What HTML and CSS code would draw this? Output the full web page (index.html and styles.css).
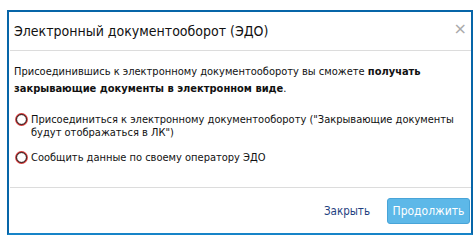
FILE: index.html
```html
<!DOCTYPE html>
<html lang="ru">
<head>
<meta charset="utf-8">
<title>ЭДО</title>
<link rel="stylesheet" href="styles.css">
</head>
<body>
<div class="dialog">
  <div class="header">
    <div class="title">Электронный документооборот (ЭДО)</div>
    <span class="close">×</span>
  </div>
  <div class="content">
    <p class="intro">Присоединившись к электронному документообороту вы сможете <b>получать</b> <b>закрывающие документы в электронном виде</b>.</p>
    <label class="option">
      <svg class="radio" width="13" height="13" viewBox="0 0 13 13"><circle cx="6.5" cy="6.5" r="5.6" fill="#fff" stroke="#d23a3a" stroke-width="1.6"/><circle cx="6.5" cy="6.5" r="4.9" fill="none" stroke="#1a1a1a" stroke-width="1"/></svg>
      <span>Присоединиться к электронному документообороту ("Закрывающие документы будут отображаться в ЛК")</span>
    </label>
    <label class="option">
      <svg class="radio" width="13" height="13" viewBox="0 0 13 13"><circle cx="6.5" cy="6.5" r="5.6" fill="#fff" stroke="#d23a3a" stroke-width="1.6"/><circle cx="6.5" cy="6.5" r="4.9" fill="none" stroke="#1a1a1a" stroke-width="1"/></svg>
      <span>Сообщить данные по своему оператору ЭДО</span>
    </label>
  </div>
  <div class="footer">
    <a class="link" href="#">Закрыть</a>
    <button class="btn" type="button">Продолжить</button>
  </div>
</div>
</body>
</html>
```
FILE: styles.css
```css
html, body {
  margin: 0;
  padding: 0;
  background: #fff;
}
body {
  padding: 10px 0 0 7px;
  font-family: "DejaVu Sans Condensed", "DejaVu Sans", sans-serif;
  color: #111;
}
.dialog {
  box-sizing: border-box;
  width: 466px;
  height: 225px;
  border: 2px solid #0765a8;
  border-bottom-color: #1784c8;
  display: flex;
  flex-direction: column;
  background: #fff;
}
.header {
  height: 39px;
  box-sizing: border-box;
  margin-left: 1px;
  border-bottom: 1px solid #dcdcdc;
  display: flex;
  align-items: center;
  justify-content: space-between;
  padding: 0 4px 0 4px;
}
.title {
  font-size: 14px;
  color: #111;
}
.close {
  font-family: "DejaVu Sans", sans-serif;
  font-size: 16px;
  color: #aaa;
  line-height: 1;
  margin-top: -4px;
}
.content {
  flex: 1;
  margin-left: 1px;
  padding: 12px 4px 0 4px;
  border-bottom: 1px solid #dcdcdc;
  font-size: 11px;
}
.intro {
  margin: 0 0 16px 0;
  line-height: 17px;
}
.option {
  display: flex;
  align-items: flex-start;
  gap: 3px;
  line-height: 13px;
  margin-bottom: 12px;
  margin-left: 1px;
}
.radio {
  flex: none;
}
.footer {
  height: 45px;
  display: flex;
  align-items: center;
  justify-content: flex-end;
  gap: 17px;
  padding-right: 1px;
}
.link {
  font-size: 11.5px;
  color: #1f3f80;
  text-decoration: none;
}
.btn {
  font-family: "DejaVu Sans Condensed", "DejaVu Sans", sans-serif;
  font-size: 12px;
  color: #fff;
  background: #5db8e8;
  border: 1px solid #48a4d8;
  border-radius: 3px;
  height: 26px;
  width: 83px;
  padding: 0;
}
```
